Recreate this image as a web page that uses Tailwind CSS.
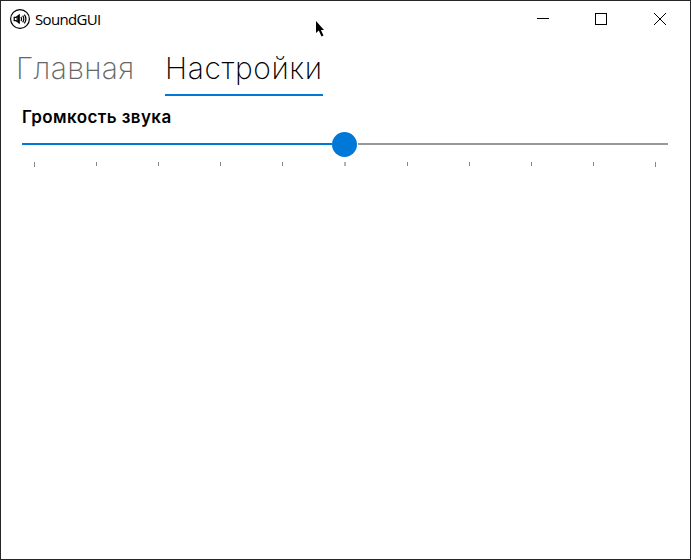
<!DOCTYPE html>
<html lang="ru">
<head>
<meta charset="utf-8">
<title>SoundGUI</title>
<script src="https://cdn.jsdelivr.net/npm/@tailwindcss/browser@4"></script>
</head>
<body class="bg-white">
<div class="relative flex h-[560px] w-[691px] flex-col overflow-hidden border border-[#262628] bg-white text-black">
  <header class="flex h-[37px] items-start justify-between pl-[9px]">
    <div class="flex h-9 items-center gap-[5px]">
      <svg class="size-5" viewBox="0 0 20 20" fill="none" stroke="#000" stroke-width="1.2">
        <circle cx="10" cy="10" r="9.4"/>
        <path d="M4.2 8.3h2l3-2.4v8.2l-3-2.4h-2z"/>
        <path d="M7.2 7.8v4.4M8.6 6.5v7M11 7.9q1.2 2.1 0 4.2M12.7 6.6q2.2 3.4 0 6.8M14.4 5.6q3 4.4 0 8.8"/>
      </svg>
      <span class="font-['Open_Sans',sans-serif] text-[15px] leading-5 tracking-[-0.65px]">SoundGUI</span>
    </div>
    <div class="flex">
      <svg class="h-9 w-[58px]" viewBox="0 0 58 36" fill="none" stroke="#000" shape-rendering="crispEdges"><path d="M23 17.5h12"/></svg>
      <svg class="h-9 w-[58px]" viewBox="0 0 58 36" fill="none" stroke="#000" shape-rendering="crispEdges"><path d="M23.5 12.5h11v11h-11z"/></svg>
      <svg class="h-9 w-[60px]" viewBox="0 0 60 36" fill="none" stroke="#000" stroke-width="1"><path d="M24 12l12 12M36 12L24 24"/></svg>
    </div>
  </header>
  <nav class="flex h-[58px] gap-[31px] pl-[15px] font-[Inter,sans-serif] text-[30px] leading-[60px] font-[250]">
    <div class="w-[118px] tracking-[0.35px] whitespace-nowrap text-[#666]">Главная</div>
    <div class="h-[58px] w-[158px] border-b-2 border-[#0078d7] tracking-[0.6px] whitespace-nowrap">Настройки</div>
  </nav>
  <main class="px-[21px] pt-[9px]">
    <label class="block font-[Inter,sans-serif] text-[17px] leading-6 font-semibold tracking-[0.4px] whitespace-nowrap">Громкость звука</label>
    <div class="mt-[2px] flex h-[26px] w-[646px] items-center">
      <div class="h-0.5 w-[310px] bg-[#0078d7]"></div>
      <div class="mt-px size-[25px] shrink-0 rounded-full bg-[#0078d7]"></div>
      <div class="ml-px h-0.5 flex-1 bg-[#999]"></div>
    </div>
    <div class="mt-[5px] flex w-[646px] justify-between px-3">
      <i class="h-[5px] w-px bg-[#888]"></i><i class="h-1 w-px bg-[#888]"></i><i class="h-1 w-px bg-[#888]"></i><i class="h-1 w-px bg-[#888]"></i><i class="h-1 w-px bg-[#888]"></i><i class="h-1 w-[2px] bg-[#b4b4b4]"></i><i class="h-1 w-px bg-[#888]"></i><i class="h-1 w-px bg-[#888]"></i><i class="h-1 w-px bg-[#888]"></i><i class="h-1 w-px bg-[#888]"></i><i class="h-[5px] w-px bg-[#888]"></i>
    </div>
  </main>
  <svg class="absolute top-[19px] left-[314px] h-[18px] w-3" viewBox="0 0 12 18"><path d="M1 1v12l2.8-2.5 2.7 6 2-1-2.6-5.5H9z" fill="#000"/></svg>
</div>
</body>
</html>
